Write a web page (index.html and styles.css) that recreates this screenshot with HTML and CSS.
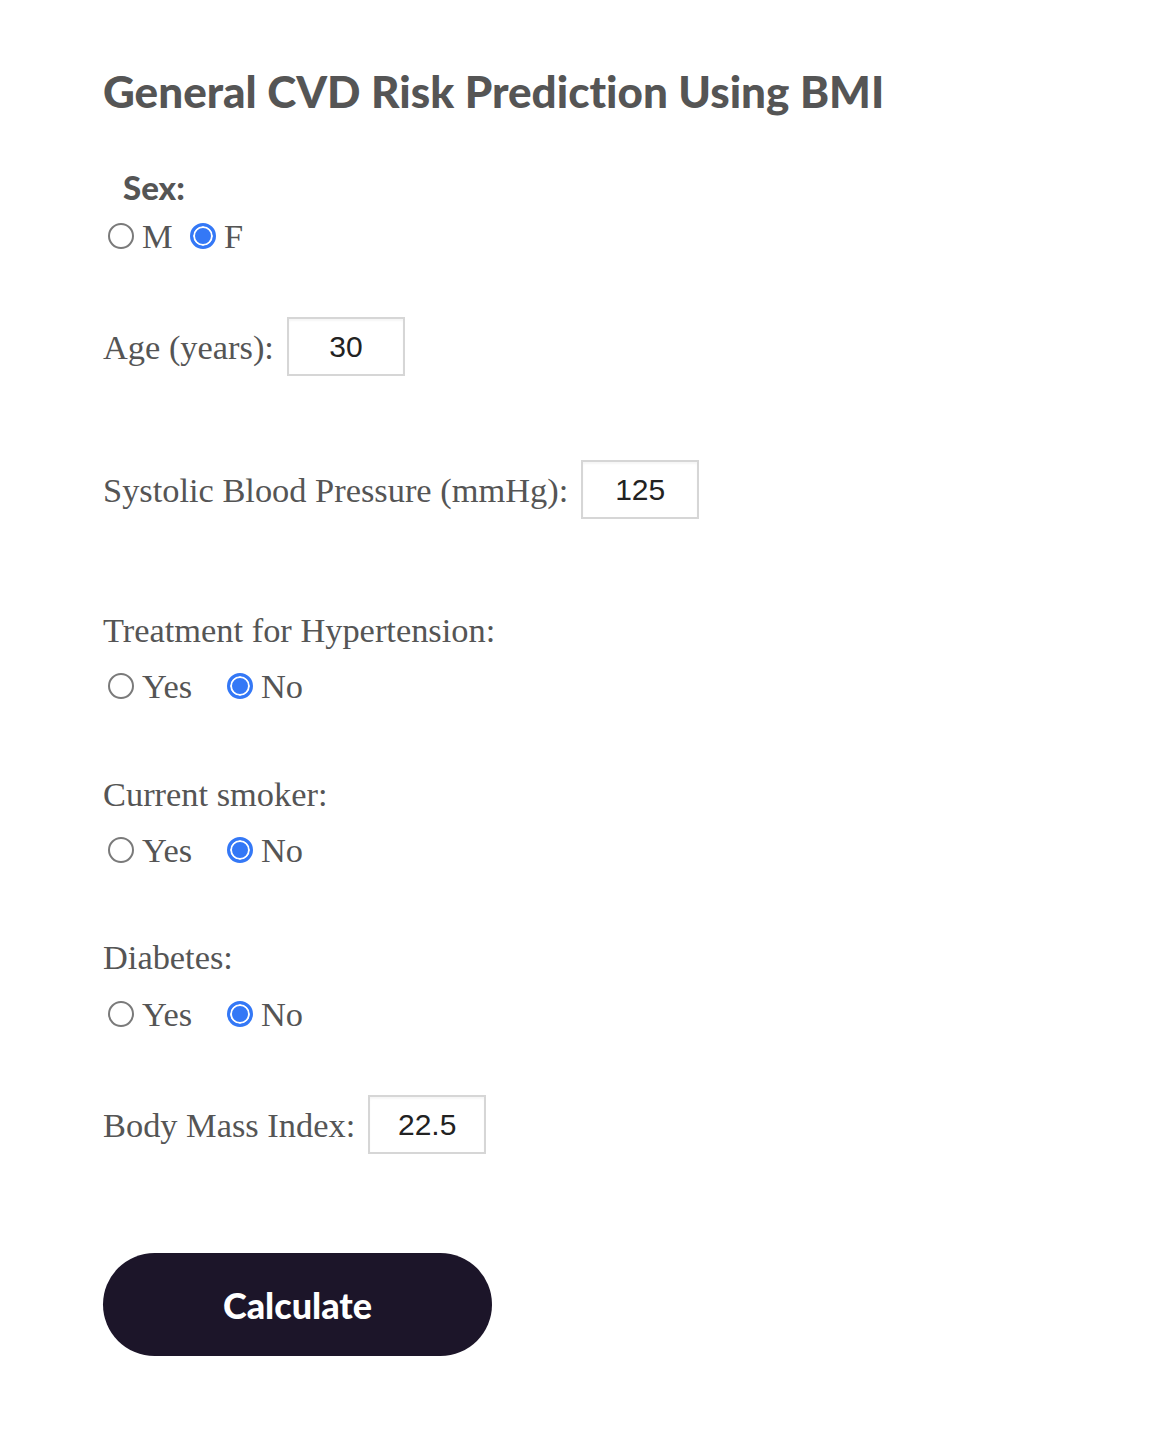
FILE: index.html
```html
<!DOCTYPE html>
<html lang="en">
<head>
<meta charset="utf-8">
<title>General CVD Risk Prediction Using BMI</title>
<link rel="stylesheet" href="styles.css">
</head>
<body>
<main class="page">
  <h1 class="title">General CVD Risk Prediction Using BMI</h1>

  <div class="sex-label">Sex:</div>
  <div class="radios radios-sex">
    <label class="opt opt-sex"><input class="radio" type="radio" name="sex" value="M"><span>M</span></label>
    <label class="opt"><input class="radio" type="radio" name="sex" value="F" checked><span>F</span></label>
  </div>

  <div class="row row-age">
    <label class="label" for="age">Age (years):</label>
    <input class="num" id="age" type="text" value="30">
  </div>

  <div class="row row-sbp">
    <label class="label" for="sbp">Systolic Blood Pressure (mmHg):</label>
    <input class="num" id="sbp" type="text" value="125">
  </div>

  <div class="label block-label label-treat">Treatment for Hypertension:</div>
  <div class="radios">
    <label class="opt opt-yes"><input class="radio" type="radio" name="trt" value="yes"><span>Yes</span></label>
    <label class="opt"><input class="radio" type="radio" name="trt" value="no" checked><span>No</span></label>
  </div>

  <div class="label block-label label-smoker">Current smoker:</div>
  <div class="radios">
    <label class="opt opt-yes"><input class="radio" type="radio" name="smk" value="yes"><span>Yes</span></label>
    <label class="opt"><input class="radio" type="radio" name="smk" value="no" checked><span>No</span></label>
  </div>

  <div class="label block-label label-diab">Diabetes:</div>
  <div class="radios radios-diab">
    <label class="opt opt-yes"><input class="radio" type="radio" name="dia" value="yes"><span>Yes</span></label>
    <label class="opt"><input class="radio" type="radio" name="dia" value="no" checked><span>No</span></label>
  </div>

  <div class="row row-bmi">
    <label class="label" for="bmi">Body Mass Index:</label>
    <input class="num" id="bmi" type="text" value="22.5">
  </div>

  <button class="calc" type="button">Calculate</button>
</main>
</body>
</html>
```

FILE: styles.css
```css
html, body {
  margin: 0;
  padding: 0;
  background: #ffffff;
}

.page {
  padding: 63px 0 60px 103px;
  color: #555555;
  font-family: "Liberation Serif", "Times New Roman", serif;
  font-size: 34.4px;
  line-height: 48px;
}

.title {
  margin: 0;
  font-family: Lato, "Open Sans", sans-serif;
  font-weight: 900;
  font-size: 44px;
  line-height: 56px;
  color: #555555;
  font-variant-ligatures: none;
  font-feature-settings: "liga" 0;
}

.sex-label {
  margin-top: 48px;
  padding-left: 20px;
  font-family: Lato, "Open Sans", sans-serif;
  font-weight: 900;
  font-size: 33px;
  line-height: 40px;
}

.radios {
  display: flex;
  align-items: center;
  height: 48px;
  margin-top: 8px;
}

.radios-sex {
  margin-top: 5px;
}

.radios-diab {
  margin-top: 9px;
}

.opt {
  display: flex;
  align-items: center;
  gap: 8px;
}

.opt-sex {
  width: 82px;
  margin-left: 5px;
}

.opt-yes {
  width: 119px;
  margin-left: 5px;
}

.radio {
  appearance: none;
  -webkit-appearance: none;
  width: 26px;
  height: 26px;
  margin: 0;
  border: 2px solid #7a7a7a;
  border-radius: 50%;
  background: #ffffff;
  box-sizing: border-box;
  flex: none;
}

.radio:checked {
  border: 3px solid #3478f6;
  background: #3478f6;
  box-shadow: inset 0 0 0 2px #ffffff;
}

.row {
  display: flex;
  align-items: center;
  gap: 13px;
  height: 59px;
}

.row-age {
  margin-top: 57px;
}

.row-sbp {
  margin-top: 84px;
}

.label-treat {
  margin-top: 87px;
}

.label-smoker {
  margin-top: 60px;
}

.label-diab {
  margin-top: 59px;
}

.row-bmi {
  margin-top: 57px;
}

.num {
  width: 118px;
  height: 59px;
  box-sizing: border-box;
  border: 2px solid #d6d6d6;
  background: #ffffff;
  box-shadow: inset 0 2px 2px rgba(0, 0, 0, 0.04);
  padding: 0;
  margin: 0;
  font-family: "Liberation Sans", Arial, sans-serif;
  font-size: 30px;
  color: #222222;
  text-align: center;
  outline: none;
}

.calc {
  display: block;
  margin: 99px 0 0 0;
  width: 389px;
  height: 103px;
  border: none;
  border-radius: 52px;
  background: #1c1529;
  color: #ffffff;
  font-family: Lato, "Open Sans", sans-serif;
  font-weight: 900;
  font-size: 36px;
  padding: 0;
  cursor: pointer;
}
```
